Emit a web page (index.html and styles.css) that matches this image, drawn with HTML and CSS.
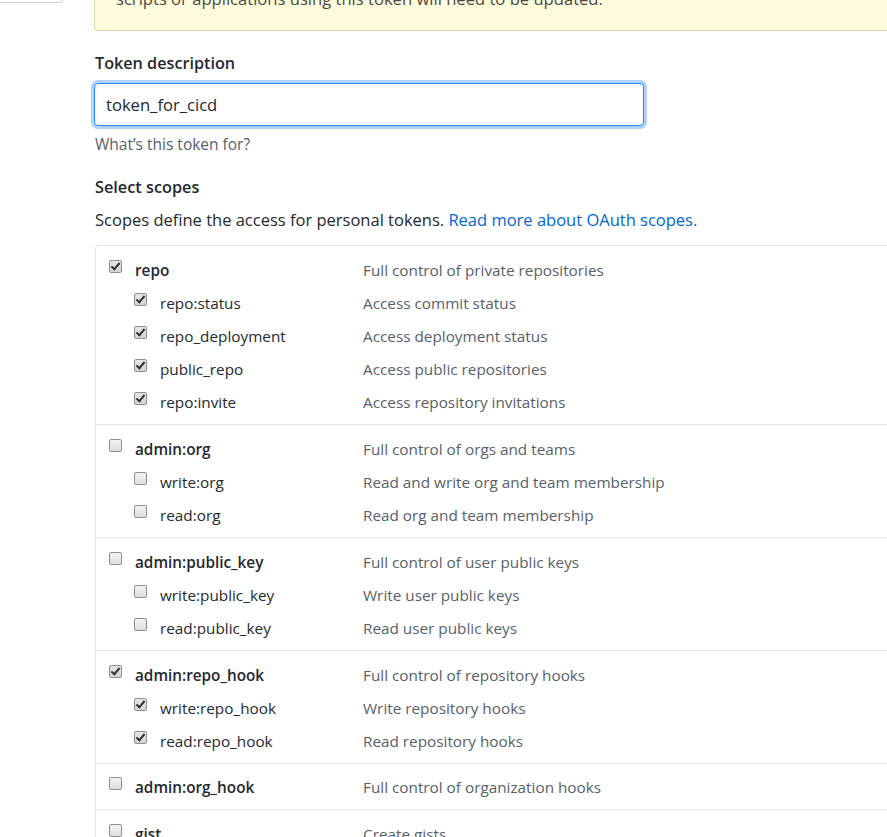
FILE: index.html
```html
<!DOCTYPE html>
<html lang="en">
<head>
<meta charset="utf-8">
<title>New personal access token</title>
<link rel="stylesheet" href="styles.css">
</head>
<body>
<div class="page">
  <aside class="sidebar"><div class="menu-end"></div></aside>
  <main class="main">
    <div class="flash-warn">scripts or applications using this token will need to be updated.</div>

    <label class="field-label" for="desc">Token description</label>
    <input class="form-control" id="desc" type="text" value="token_for_cicd">
    <p class="note">What’s this token for?</p>

    <h3 class="scopes-title">Select scopes</h3>
    <p class="scopes-intro">Scopes define the access for personal tokens. <a href="#">Read more about OAuth scopes.</a></p>

    <div class="scopes">
      <div class="group">
        <div class="row main-row"><span class="name"><span class="cb on"></span><b>repo</b></span><span class="desc">Full control of private repositories</span></div>
        <div class="row sub"><span class="name"><span class="cb on"></span>repo:status</span><span class="desc">Access commit status</span></div>
        <div class="row sub"><span class="name"><span class="cb on"></span>repo_deployment</span><span class="desc">Access deployment status</span></div>
        <div class="row sub"><span class="name"><span class="cb on"></span>public_repo</span><span class="desc">Access public repositories</span></div>
        <div class="row sub"><span class="name"><span class="cb on"></span>repo:invite</span><span class="desc">Access repository invitations</span></div>
      </div>
      <div class="group">
        <div class="row main-row"><span class="name"><span class="cb"></span><b>admin:org</b></span><span class="desc">Full control of orgs and teams</span></div>
        <div class="row sub"><span class="name"><span class="cb"></span>write:org</span><span class="desc">Read and write org and team membership</span></div>
        <div class="row sub"><span class="name"><span class="cb"></span>read:org</span><span class="desc">Read org and team membership</span></div>
      </div>
      <div class="group">
        <div class="row main-row"><span class="name"><span class="cb"></span><b>admin:public_key</b></span><span class="desc">Full control of user public keys</span></div>
        <div class="row sub"><span class="name"><span class="cb"></span>write:public_key</span><span class="desc">Write user public keys</span></div>
        <div class="row sub"><span class="name"><span class="cb"></span>read:public_key</span><span class="desc">Read user public keys</span></div>
      </div>
      <div class="group">
        <div class="row main-row"><span class="name"><span class="cb on"></span><b>admin:repo_hook</b></span><span class="desc">Full control of repository hooks</span></div>
        <div class="row sub"><span class="name"><span class="cb on"></span>write:repo_hook</span><span class="desc">Write repository hooks</span></div>
        <div class="row sub"><span class="name"><span class="cb on"></span>read:repo_hook</span><span class="desc">Read repository hooks</span></div>
      </div>
      <div class="group">
        <div class="row main-row"><span class="name"><span class="cb"></span><b>admin:org_hook</b></span><span class="desc">Full control of organization hooks</span></div>
      </div>
      <div class="group">
        <div class="row main-row"><span class="name"><span class="cb"></span><b>gist</b></span><span class="desc">Create gists</span></div>
      </div>
    </div>
  </main>
</div>
</body>
</html>
```

FILE: styles.css
```css
html, body {
  margin: 0;
  padding: 0;
  background: #fff;
  overflow: hidden;
}
body {
  font-family: "Open Sans", "Noto Sans", sans-serif;
  font-size: 15.3px;
  line-height: 20px;
  color: #24292e;
}
.page {
  display: flex;
  align-items: flex-start;
  width: 1100px;
}
.sidebar {
  width: 64px;
  flex: none;
}
.menu-end {
  height: 2px;
  border: 1px solid #d1d5da;
  border-top: 0;
  border-left: 0;
  border-radius: 0 0 4px 0;
  width: 62px;
}
.main {
  margin-left: 30px;
  width: 1000px;
  flex: none;
}
.flash-warn {
  margin-top: -11px;
  padding: 0 21px 21px;
  background: #fffbdd;
  border: 1px solid #dfd8a7;
  border-top: 0;
  border-radius: 0 0 4px 4px;
  color: #4c4a42;
  font-size: 16.6px;
  line-height: 20px;
}
.field-label {
  display: block;
  margin-top: 22px;
  padding-left: 1px;
  font-weight: 600;
  font-size: 16.2px;
}
.form-control {
  display: block;
  box-sizing: border-box;
  margin: 10px 0 0;
  width: 550px;
  height: 43px;
  padding: 0 11px;
  font-family: inherit;
  font-size: 16.6px;
  color: #24292e;
  border: 1px solid #2188ff;
  border-radius: 4px;
  box-shadow: 0 0 0 3px rgba(3, 102, 214, 0.3);
  outline: none;
  background: #fff;
}
.note {
  margin: 8px 0 0;
  padding-left: 1px;
  color: #586069;
  font-size: 15.5px;
}
.scopes-title {
  margin: 23px 0 0;
  padding-left: 1px;
  font-size: 16.3px;
  font-weight: 600;
  line-height: 20px;
}
.scopes-intro {
  margin: 13px 0 0;
  padding-left: 1px;
  font-size: 16.5px;
}
.scopes-intro a {
  color: #0366d6;
  text-decoration: none;
}
.scopes {
  margin-top: 15px;
  margin-left: 1px;
  border: 1px solid #e1e4e8;
  border-radius: 4px 0 0 0;
  border-right: 0;
}
.group {
  padding: 14px 0 12px;
  display: flex;
  flex-direction: column;
  gap: 13px;
  border-bottom: 1px solid #e1e4e8;
}
.group:nth-child(5) {
  padding-top: 13px;
}
.row {
  display: flex;
  align-items: flex-start;
}
.name {
  display: flex;
  align-items: flex-start;
  gap: 13px;
  width: 267px;
  box-sizing: border-box;
  padding-left: 13px;
  flex: none;
}
.sub .name {
  padding-left: 38px;
}
.name b {
  font-weight: 600;
}
.desc {
  color: #586069;
}
.cb {
  width: 13px;
  height: 13px;
  flex: none;
  box-sizing: border-box;
  border: 1px solid #8f8f8f;
  border-radius: 2px;
  background: linear-gradient(#f4f4f4, #dedede);
  position: relative;
}
.cb.on {
  background: linear-gradient(#e6e6e6, #d4d4d4);
}
.cb.on::after {
  content: "";
  position: absolute;
  left: 3px;
  top: 0;
  width: 3px;
  height: 7px;
  border: solid #333;
  border-width: 0 2px 2px 0;
  transform: rotate(40deg);
}
```
